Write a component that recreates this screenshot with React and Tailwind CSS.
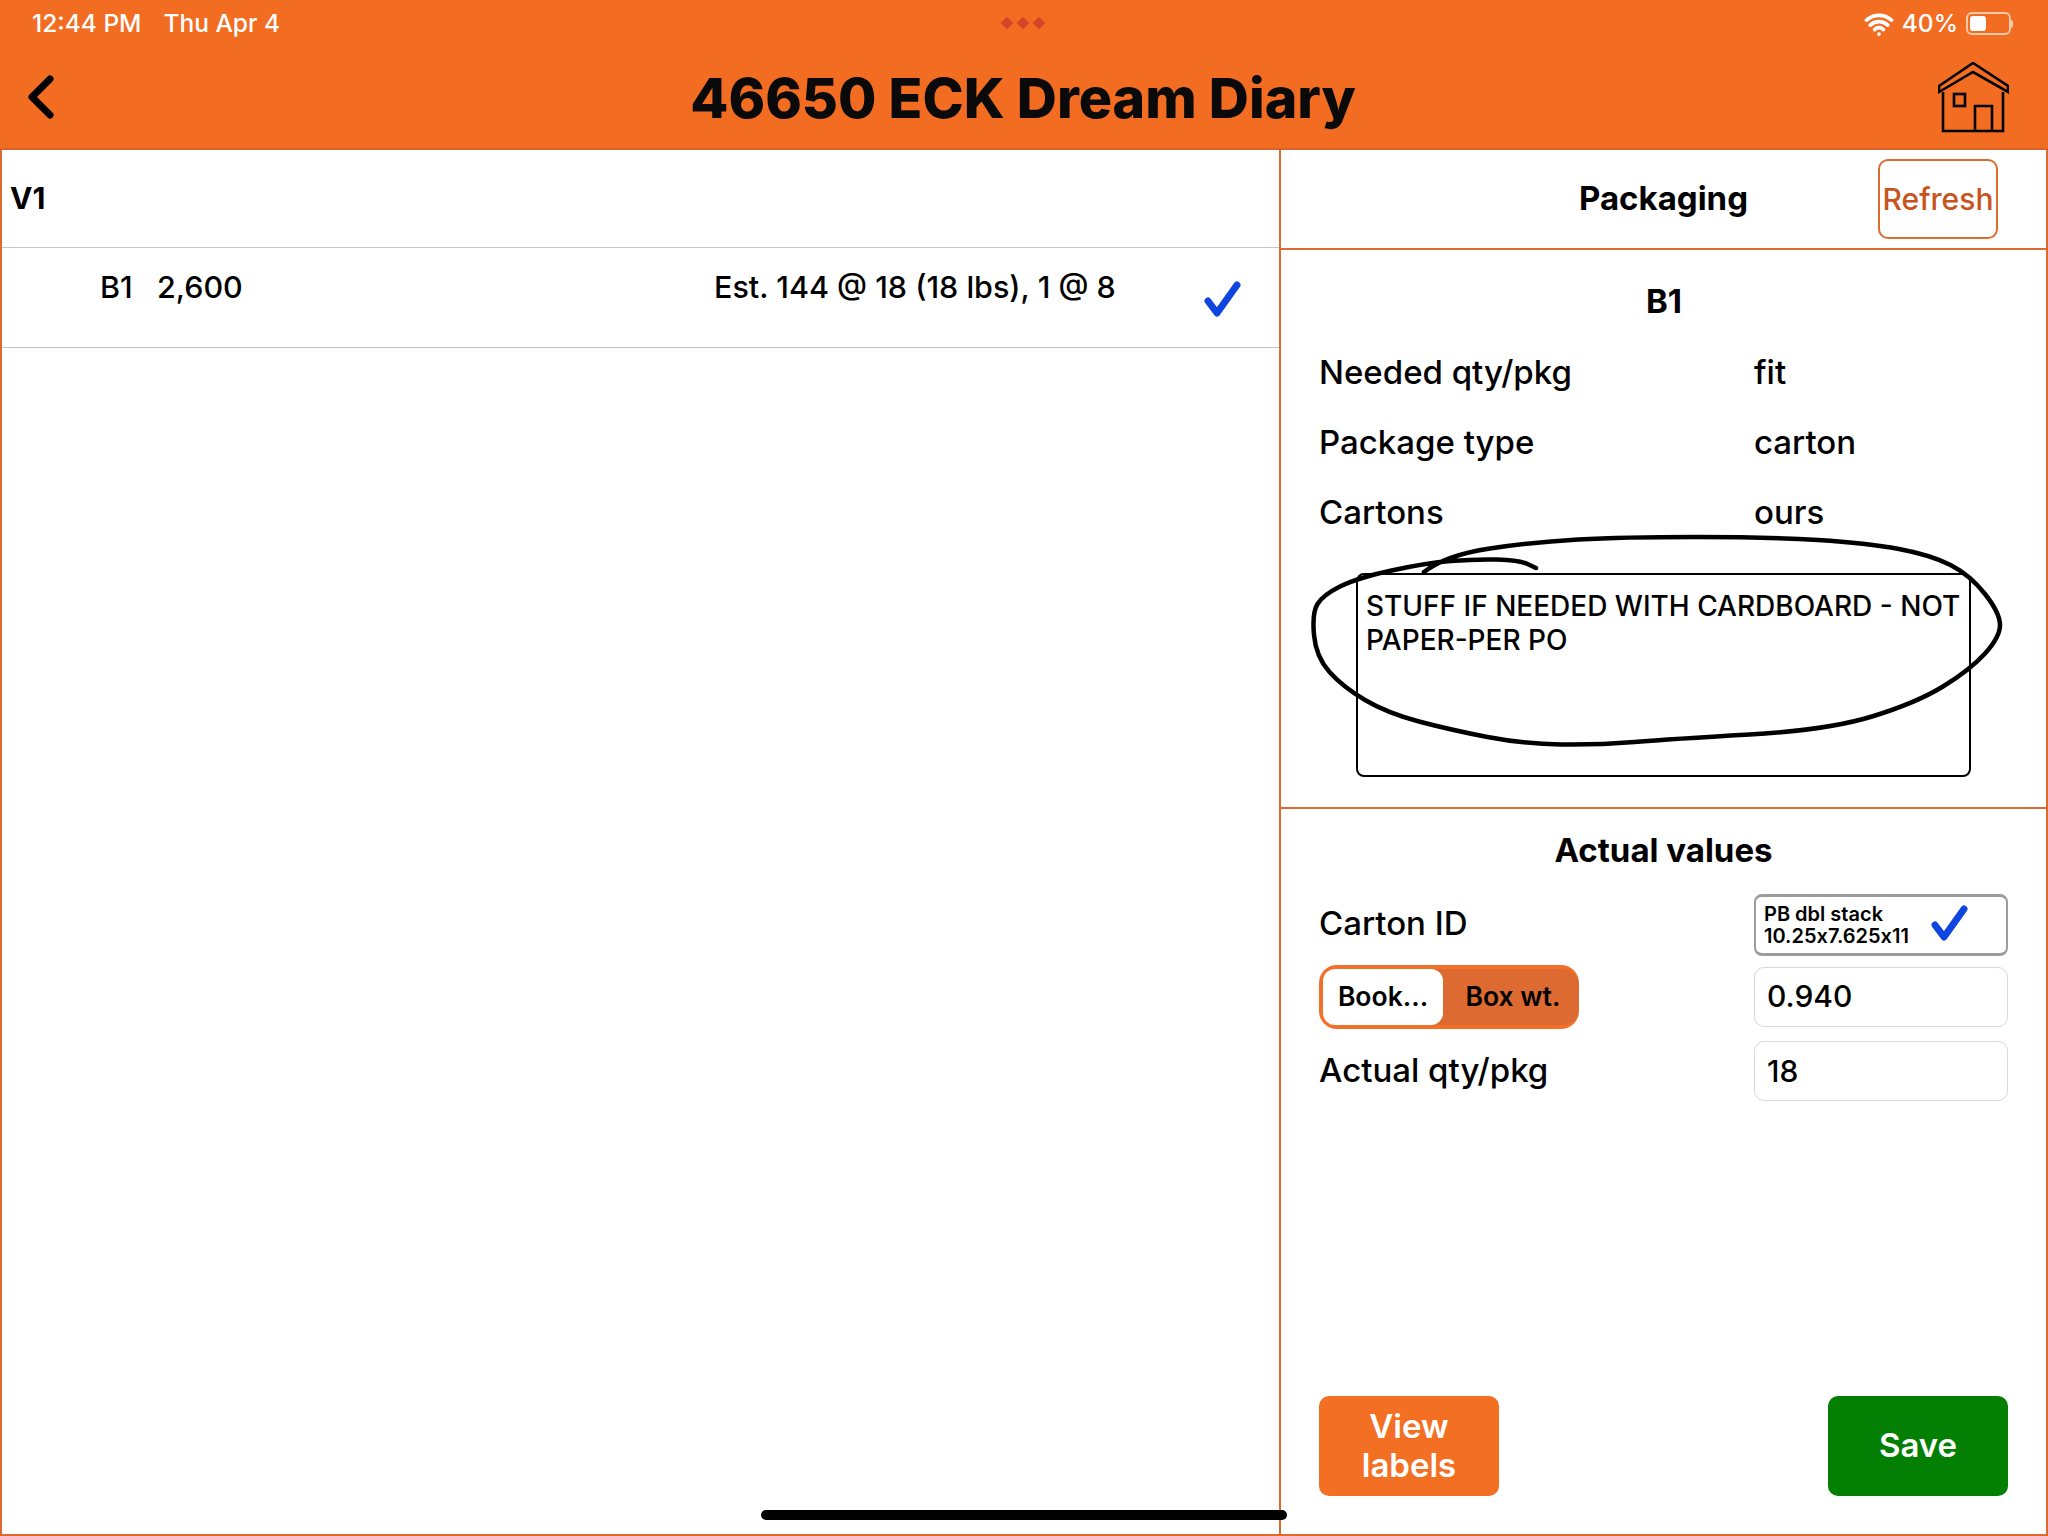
import React from 'react';
import { Wifi } from 'lucide-react';

const font = { fontFamily: 'Inter, "Liberation Sans", sans-serif' };

// pen annotation circled around the note, in px from the svg's top left
const scribble = [
    [145, 72], [167, 55], [255, 42], [343, 37], [490, 37], [588, 43], [652, 55], [691, 75],
    [721, 113], [721, 137], [691, 170], [637, 203], [549, 230], [392, 239], [319, 245], [245, 244],
    [172, 230], [108, 213], [64, 187], [37, 157], [33, 113], [44, 95], [78, 78], [147, 63],
    [196, 59], [240, 60], [257, 68],
];

function smoothPath(points) {
    let d = `M${points[0][0]} ${points[0][1]}`;
    for (let i = 1; i < points.length - 1; i++) {
        const mx = (points[i][0] + points[i + 1][0]) / 2;
        const my = (points[i][1] + points[i + 1][1]) / 2;
        d += ` Q${points[i][0]} ${points[i][1]} ${mx} ${my}`;
    }
    const last = points[points.length - 1];
    return `${d} L${last[0]} ${last[1]}`;
}

function Check({ className }) {
    return (
        <svg viewBox="0 0 38 36" className={className} fill="none">
            <path d="M4 20 L13 32 L33 4" stroke="#0f46e0" strokeWidth="7" strokeLinecap="round" strokeLinejoin="round" />
        </svg>
    );
}

function InfoRow({ label, value }) {
    return (
        <div className="flex items-center h-[70px] text-[33px] font-medium text-black">
            <div className="w-[435px]">{label}</div>
            <div>{value}</div>
        </div>
    );
}

function App() {
    return (
        <div style={font} className="relative w-[2048px] h-[1536px] overflow-hidden bg-white flex flex-col">
            {/* status bar + nav */}
            <div className="h-[150px] bg-[#f26c22] border-b-2 border-[#d9622a] flex flex-col shrink-0">
                <div className="h-[46px] flex items-center justify-between pl-[32px] pr-[35px] pt-[1px] text-white text-[24.5px] font-medium relative">
                    <div className="flex gap-[22px]">
                        <span>12:44 PM</span>
                        <span>Thu Apr 4</span>
                    </div>
                    <div className="absolute left-[1002px] top-[18px] flex gap-[6px]">
                        <span className="w-[10px] h-[10px] bg-[#d2462a] rotate-45 scale-90"></span>
                        <span className="w-[10px] h-[10px] bg-[#d2462a] rotate-45 scale-90"></span>
                        <span className="w-[10px] h-[10px] bg-[#d2462a] rotate-45 scale-90"></span>
                    </div>
                    <div className="flex items-center gap-[8px]">
                        <Wifi size={30} color="#fff" strokeWidth={3} />
                        <span>40%</span>
                        <div className="flex items-center">
                            <div className="w-[45px] h-[23px] rounded-[6px] border-2 border-[#f8c9a8] p-[2px]">
                                <div className="w-[16px] h-full bg-white rounded-[3px]"></div>
                            </div>
                            <div className="w-[2px] h-[8px] bg-[#f8c9a8] rounded-r"></div>
                        </div>
                    </div>
                </div>
                <div className="flex-1 flex items-center pl-[27px] pr-[39px]">
                    <div className="flex-1">
                        <svg viewBox="0 0 28 44" className="w-[28px] h-[44px]" fill="none">
                            <path d="M23 4 L5 22 L23 40" stroke="#000" strokeWidth="7" strokeLinecap="round" strokeLinejoin="round" />
                        </svg>
                    </div>
                    <div className="ml-[10px] text-[55.5px] font-extrabold text-[#0a0a0a] pt-[2px]">46650 ECK Dream Diary</div>
                    <div className="flex-1 flex justify-end">
                        <svg viewBox="0 0 71 71" className="w-[71px] h-[71px]" fill="none" stroke="#000" strokeWidth="2.6">
                            <path d="M1 24 L35 1 L70 24 V30 L35 10 L1 30 Z" />
                            <path d="M5 30 V69 H65 V30" />
                            <rect x="16" y="32" width="11" height="12" />
                            <path d="M37 69 V44 H54 V69" />
                        </svg>
                    </div>
                </div>
            </div>

            <div className="flex-1 flex border-l-2 border-b-2 border-r-2 border-[#dd6b2f] min-h-0">
                {/* versions list */}
                <div className="w-[1279px] border-r-2 border-[#dd6b2f] text-black">
                    <div className="h-[98px] flex items-center pl-[8px] border-b border-[#c4c4c4] text-[30px] font-bold">V1</div>
                    <div className="h-[100px] flex items-start border-b border-[#c4c4c4] text-[30.5px] font-medium relative">
                        <div className="ml-[98px] mt-[16px] w-[57px]">B1</div>
                        <div className="mt-[16px] w-[557px]">2,600</div>
                        <div className="mt-[16px]">Est. 144 @ 18 (18 lbs), 1 @ 8</div>
                        <Check className="absolute left-[1202px] top-[33px] w-[38px] h-[36px]" />
                    </div>
                </div>

                {/* packaging panel */}
                <div className="flex-1 flex flex-col min-w-0">
                    <div className="h-[100px] flex items-center justify-center border-b-2 border-[#dd6b2f] relative shrink-0">
                        <div className="text-[33px] font-bold text-black">Packaging</div>
                        <div className="absolute left-[597px] top-[9px] w-[120px] h-[80px] rounded-[10px] border-2 border-[#dd6b2f] flex items-center justify-center text-[30px] font-medium text-[#c9531c]">
                            Refresh
                        </div>
                    </div>

                    <div className="h-[559px] border-b-2 border-[#dd6b2f] shrink-0 pl-[38px] pr-[37px] pt-[29px]">
                        <div className="text-[33px] font-bold text-black text-center h-[44px] leading-[44px] mb-[15px]">B1</div>
                        <InfoRow label="Needed qty/pkg" value="fit" />
                        <InfoRow label="Package type" value="carton" />
                        <InfoRow label="Cartons" value="ours" />
                        <div className="relative ml-[37px] mt-[25px] w-[615px] h-[204px] border-2 border-black rounded-[8px] pl-[8px] pt-[14px] text-[28px] leading-[34px] font-medium text-black">
                            STUFF IF NEEDED WITH CARDBOARD - NOT PAPER-PER PO
                            <svg className="absolute left-[-79px] top-[-75px] w-[768px] h-[320px] pointer-events-none" fill="none">
                                <path d={smoothPath(scribble)} stroke="#000" strokeWidth="4.5" strokeLinecap="round" strokeLinejoin="round" />
                            </svg>
                        </div>
                    </div>

                    <div className="flex-1 flex flex-col justify-between pl-[38px] pr-[38px] pt-[19px] pb-[38px] min-h-0">
                        <div>
                            <div className="text-[33px] font-bold text-black text-center h-[44px] leading-[44px] mb-[22px]">Actual values</div>
                            <div className="flex items-center h-[62px] mb-[10px] text-[33px] font-medium text-black">
                                <div className="w-[435px] pb-[3px]">Carton ID</div>
                                <div className="w-[254px] h-[62px] rounded-[8px] border-2 border-t-[3px] border-b-[3px] border-[#9c9c9c] flex items-center pl-[8px] relative">
                                    <div className="text-[20px] leading-[22px] font-semibold [font-feature-settings:'calt'_0]">
                                        <div>PB dbl stack</div>
                                        <div>10.25x7.625x11</div>
                                    </div>
                                    <Check className="absolute left-[175px] top-[8px] w-[38px] h-[36px]" />
                                </div>
                            </div>
                            <div className="flex items-center h-[61px] mb-[14px]">
                                <div className="w-[260px] h-[64px] bg-[#dd6a30] rounded-[18px] border-[4px] border-[#f2702a] border-r-0 flex text-[26.5px] font-semibold text-black mr-[175px]">
                                    <div className="w-[120px] bg-white rounded-[12px] flex items-center justify-center">Book...</div>
                                    <div className="flex-1 flex items-center justify-center pl-[4px]">Box wt.</div>
                                </div>
                                <div className="w-[254px] h-[60px] rounded-[10px] border border-[#d8d8d8] flex items-center pl-[12px] text-[30px] font-medium text-black">0.940</div>
                            </div>
                            <div className="flex items-center h-[60px] text-[33px] font-medium text-black">
                                <div className="w-[435px]">Actual qty/pkg</div>
                                <div className="w-[254px] h-[60px] rounded-[10px] border border-[#d8d8d8] flex items-center pl-[12px] text-[30px] font-medium">18</div>
                            </div>
                        </div>
                        <div className="flex justify-between">
                            <div className="w-[180px] h-[100px] rounded-[10px] bg-[#f36f23] text-white text-[33px] leading-[39px] font-semibold flex items-center justify-center text-center">
                                View<br />labels
                            </div>
                            <div className="w-[180px] h-[100px] rounded-[10px] bg-[#037f03] text-white text-[33px] font-semibold flex items-center justify-center">
                                Save
                            </div>
                        </div>
                    </div>
                </div>
            </div>

            {/* home indicator */}
            <div className="absolute left-[761px] top-[1510px] w-[526px] h-[10px] rounded-full bg-black"></div>
        </div>
    );
}

export default App;
